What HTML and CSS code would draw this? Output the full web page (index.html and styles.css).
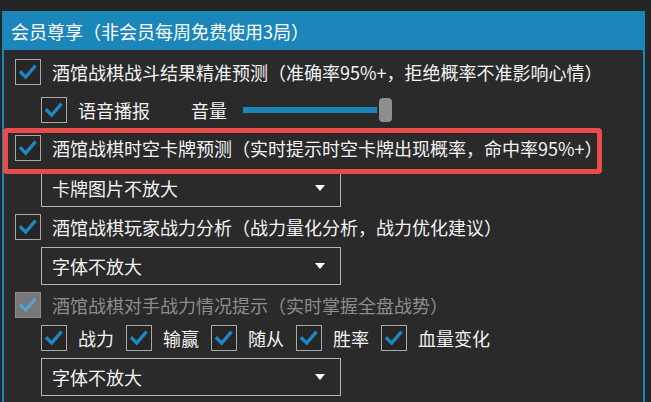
FILE: index.html
```html
<!DOCTYPE html>
<html lang="zh-CN">
<head>
<meta charset="utf-8">
<link rel="stylesheet" href="styles.css">
</head>
<body>
<div class="panel">
  <div class="header">会员尊享（非会员每周免费使用3局）</div>
  <div class="content">
    <div class="row r-wide">
      <span class="cb"><svg viewBox="0 0 26 26"><path d="M5.5 13.5 L10.5 18.5 L20 7.5"/></svg></span>
      <span class="label">酒馆战棋战斗结果精准预测（准确率95%+，拒绝概率不准影响心情）</span>
    </div>
    <div class="row r-wide sub">
      <span class="cb"><svg viewBox="0 0 26 26"><path d="M5.5 13.5 L10.5 18.5 L20 7.5"/></svg></span>
      <span class="label">语音播报</span>
      <span class="label vol">音量</span>
      <div class="slider"><div class="track"></div><div class="thumb"></div></div>
    </div>
    <div class="row r-hl">
      <div class="highlight"></div>
      <span class="cb"><svg viewBox="0 0 26 26"><path d="M5.5 13.5 L10.5 18.5 L20 7.5"/></svg></span>
      <span class="label">酒馆战棋时空卡牌预测（实时提示时空卡牌出现概率，命中率95%+）</span>
    </div>
    <div class="select"><span>卡牌图片不放大</span><span class="arrow"></span></div>
    <div class="row">
      <span class="cb"><svg viewBox="0 0 26 26"><path d="M5.5 13.5 L10.5 18.5 L20 7.5"/></svg></span>
      <span class="label">酒馆战棋玩家战力分析（战力量化分析，战力优化建议）</span>
    </div>
    <div class="select"><span>字体不放大</span><span class="arrow"></span></div>
    <div class="row disabled">
      <span class="cb"><svg viewBox="0 0 26 26"><path d="M5.5 13.5 L10.5 18.5 L20 7.5"/></svg></span>
      <span class="label">酒馆战棋对手战力情况提示（实时掌握全盘战势）</span>
    </div>
    <div class="row sub multi">
      <span class="item"><span class="cb"><svg viewBox="0 0 26 26"><path d="M5.5 13.5 L10.5 18.5 L20 7.5"/></svg></span><span class="label">战力</span></span>
      <span class="item"><span class="cb"><svg viewBox="0 0 26 26"><path d="M5.5 13.5 L10.5 18.5 L20 7.5"/></svg></span><span class="label">输赢</span></span>
      <span class="item"><span class="cb"><svg viewBox="0 0 26 26"><path d="M5.5 13.5 L10.5 18.5 L20 7.5"/></svg></span><span class="label">随从</span></span>
      <span class="item"><span class="cb"><svg viewBox="0 0 26 26"><path d="M5.5 13.5 L10.5 18.5 L20 7.5"/></svg></span><span class="label">胜率</span></span>
      <span class="item"><span class="cb"><svg viewBox="0 0 26 26"><path d="M5.5 13.5 L10.5 18.5 L20 7.5"/></svg></span><span class="label">血量变化</span></span>
    </div>
    <div class="select"><span>字体不放大</span><span class="arrow"></span></div>
  </div>
</div>
</body>
</html>
```

FILE: styles.css
```css
html, body {
  margin: 0;
  padding: 0;
}
body {
  width: 651px;
  height: 402px;
  overflow: hidden;
  background: #252525;
  font-family: "Noto Sans CJK SC", "Noto Sans", sans-serif;
  font-size: 18px;
  color: #f2f2f2;
  padding-top: 11px;
  box-sizing: border-box;
}
.panel {
  margin-left: 2px;
  width: 643px;
  height: 391px;
  box-sizing: border-box;
  border-left: 2px solid #1b86b9;
  border-right: 2px solid #1b86b9;
  background: #2a2a2a;
}
.header {
  height: 39px;
  background: #1b86b9;
  display: flex;
  align-items: center;
  margin: 0 -2px;
  padding-left: 9px;
  color: #ffffff;
  line-height: 1;
}
.content {
  padding: 9px 0 0 11px;
  display: flex;
  flex-direction: column;
  gap: 7px;
}
.row {
  display: flex;
  align-items: center;
  height: 26px;
  line-height: 1;
  position: relative;
}
.r-wide {
  margin-bottom: 5px;
}
.r-hl {
  margin-bottom: 1px;
}
.sub {
  margin-left: 26px;
}
.cb {
  width: 26px;
  height: 26px;
  box-sizing: border-box;
  border: 1px solid #a9a9a9;
  background: #262626;
  flex: none;
  margin-right: 11px;
  position: relative;
  z-index: 1;
}
.cb svg {
  display: block;
  width: 24px;
  height: 24px;
}
.cb path {
  fill: none;
  stroke: #1d87c4;
  stroke-width: 3.6;
  stroke-linecap: square;
  stroke-linejoin: miter;
}
.label {
  white-space: nowrap;
  position: relative;
  z-index: 1;
}
.vol {
  margin-left: 41px;
}
.slider {
  margin-left: 16px;
  display: flex;
  align-items: center;
  height: 26px;
}
.track {
  width: 134px;
  height: 6px;
  background: #1b86b9;
}
.thumb {
  margin-left: 2px;
  width: 13px;
  height: 24px;
  border-radius: 4px;
  background: #8e8e8e;
}
.highlight {
  position: absolute;
  left: -12px;
  top: -7px;
  width: 599px;
  height: 46px;
  box-sizing: border-box;
  border: 5px solid #ea4b4b;
  border-radius: 4px;
  z-index: 2;
}
.select {
  margin-left: 26px;
  width: 300px;
  height: 38px;
  box-sizing: border-box;
  border: 1px solid #b3b3b3;
  display: flex;
  align-items: center;
  justify-content: space-between;
  padding: 0 15px 0 10px;
  line-height: 1;
}
.arrow {
  width: 0;
  height: 0;
  border-left: 5px solid transparent;
  border-right: 5px solid transparent;
  border-top: 6px solid #ffffff;
}
.disabled .cb {
  background: #777777;
  border-color: #8d8d8d;
}
.disabled .cb path {
  stroke: #5aa0c8;
}
.disabled .label {
  color: #8c8c8c;
}
.item {
  display: flex;
  align-items: center;
  margin-right: 12px;
}
```
